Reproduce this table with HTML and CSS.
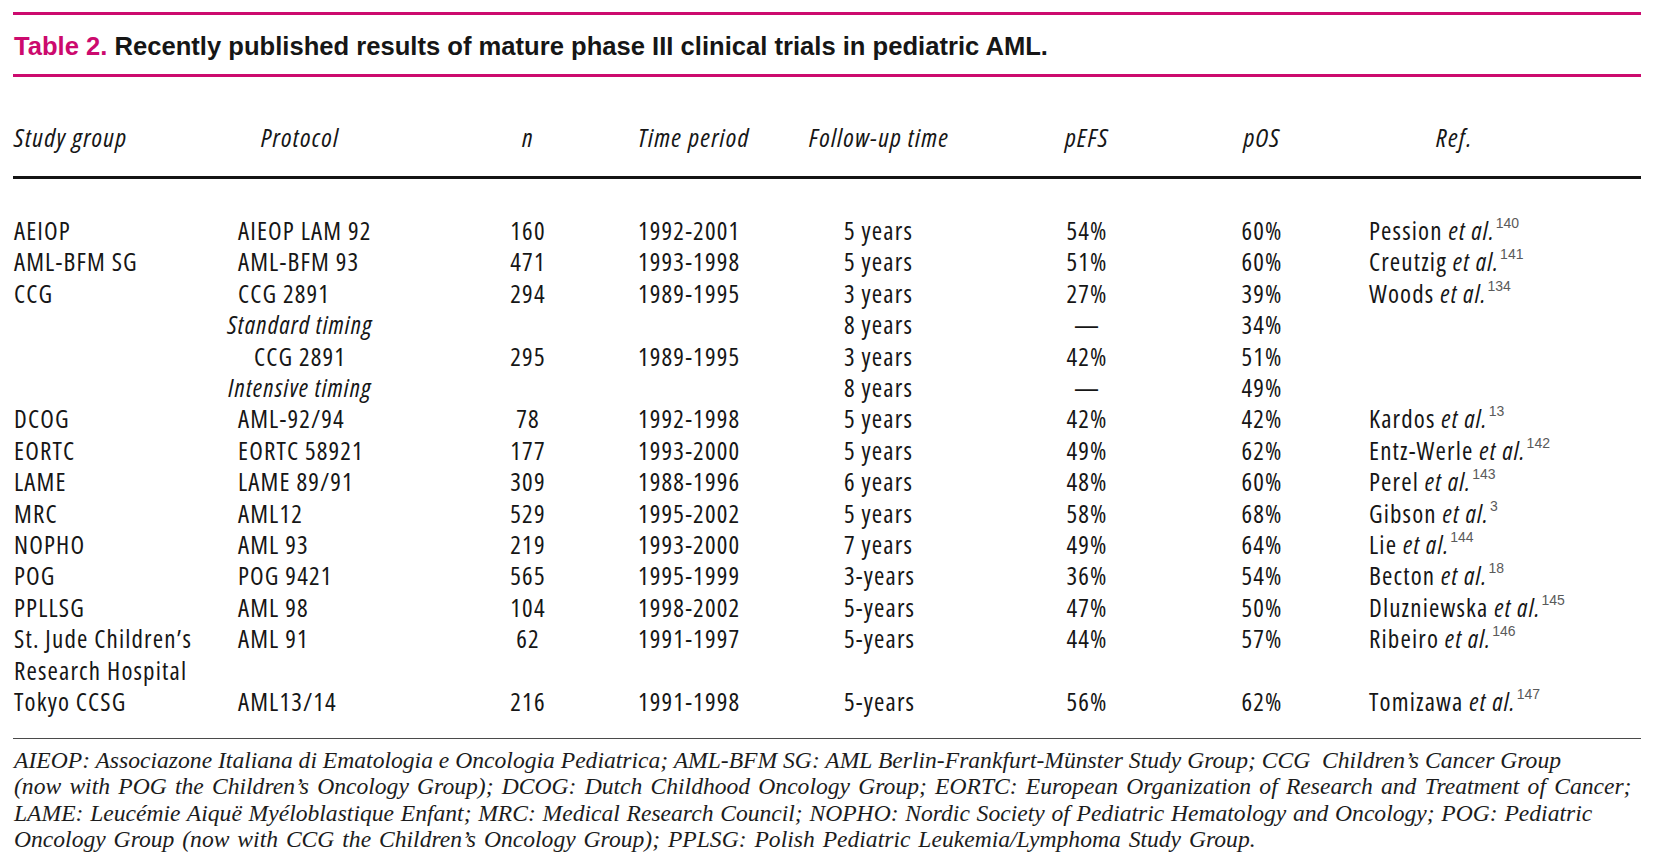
FILE: index.html
```html
<!DOCTYPE html>
<html lang="en">
<head>
<meta charset="utf-8">
<title>Table 2</title>
<link rel="stylesheet" href="styles.css">
</head>
<body>
<div class="page">
  <div class="rule-magenta rule-top"></div>
  <h1 class="title"><span class="title-label">Table 2.</span> Recently published results of mature phase III clinical trials in pediatric AML.</h1>
  <div class="rule-magenta rule-second"></div>

  <div class="grid head">
    <div class="c1">Study group</div>
    <div class="c2 ctr">Protocol</div>
    <div class="c3">n</div>
    <div class="c4">Time period</div>
    <div class="c5 ctr">Follow-up time</div>
    <div class="c6">pEFS</div>
    <div class="c7">pOS</div>
    <div class="c8 hdr">Ref.</div>
  </div>
  <div class="rule-black"></div>

  <div class="body">
    <div class="grid row">
      <div class="c1">AEIOP</div><div class="c2">AIEOP LAM 92</div><div class="c3">160</div><div class="c4">1992-2001</div><div class="c5">5 years</div><div class="c6">54%</div><div class="c7">60%</div><div class="c8">Pession <i>et al.</i><sup class="ref-num">140</sup></div>
    </div>
    <div class="grid row">
      <div class="c1">AML-BFM SG</div><div class="c2">AML-BFM 93</div><div class="c3">471</div><div class="c4">1993-1998</div><div class="c5">5 years</div><div class="c6">51%</div><div class="c7">60%</div><div class="c8">Creutzig <i>et al.</i><sup class="ref-num">141</sup></div>
    </div>
    <div class="grid row">
      <div class="c1">CCG</div><div class="c2">CCG 2891</div><div class="c3">294</div><div class="c4">1989-1995</div><div class="c5">3 years</div><div class="c6">27%</div><div class="c7">39%</div><div class="c8">Woods <i>et al.</i><sup class="ref-num">134</sup></div>
    </div>
    <div class="grid row">
      <div class="c1"></div><div class="c2 ctr"><i>Standard timing</i></div><div class="c3"></div><div class="c4"></div><div class="c5">8 years</div><div class="c6">—</div><div class="c7">34%</div><div class="c8"></div>
    </div>
    <div class="grid row">
      <div class="c1"></div><div class="c2 ctr">CCG 2891</div><div class="c3">295</div><div class="c4">1989-1995</div><div class="c5">3 years</div><div class="c6">42%</div><div class="c7">51%</div><div class="c8"></div>
    </div>
    <div class="grid row">
      <div class="c1"></div><div class="c2 ctr"><i>Intensive timing</i></div><div class="c3"></div><div class="c4"></div><div class="c5">8 years</div><div class="c6">—</div><div class="c7">49%</div><div class="c8"></div>
    </div>
    <div class="grid row">
      <div class="c1">DCOG</div><div class="c2">AML-92/94</div><div class="c3">78</div><div class="c4">1992-1998</div><div class="c5">5 years</div><div class="c6">42%</div><div class="c7">42%</div><div class="c8">Kardos <i>et al.</i><sup class="ref-num">13</sup></div>
    </div>
    <div class="grid row">
      <div class="c1">EORTC</div><div class="c2">EORTC 58921</div><div class="c3">177</div><div class="c4">1993-2000</div><div class="c5">5 years</div><div class="c6">49%</div><div class="c7">62%</div><div class="c8">Entz-Werle <i>et al.</i><sup class="ref-num">142</sup></div>
    </div>
    <div class="grid row">
      <div class="c1">LAME</div><div class="c2">LAME 89/91</div><div class="c3">309</div><div class="c4">1988-1996</div><div class="c5">6 years</div><div class="c6">48%</div><div class="c7">60%</div><div class="c8">Perel <i>et al.</i><sup class="ref-num">143</sup></div>
    </div>
    <div class="grid row">
      <div class="c1">MRC</div><div class="c2">AML12</div><div class="c3">529</div><div class="c4">1995-2002</div><div class="c5">5 years</div><div class="c6">58%</div><div class="c7">68%</div><div class="c8">Gibson <i>et al.</i><sup class="ref-num">3</sup></div>
    </div>
    <div class="grid row">
      <div class="c1">NOPHO</div><div class="c2">AML 93</div><div class="c3">219</div><div class="c4">1993-2000</div><div class="c5">7 years</div><div class="c6">49%</div><div class="c7">64%</div><div class="c8">Lie <i>et al.</i><sup class="ref-num">144</sup></div>
    </div>
    <div class="grid row">
      <div class="c1">POG</div><div class="c2">POG 9421</div><div class="c3">565</div><div class="c4">1995-1999</div><div class="c5">3-years</div><div class="c6">36%</div><div class="c7">54%</div><div class="c8">Becton <i>et al.</i><sup class="ref-num">18</sup></div>
    </div>
    <div class="grid row">
      <div class="c1">PPLLSG</div><div class="c2">AML 98</div><div class="c3">104</div><div class="c4">1998-2002</div><div class="c5">5-years</div><div class="c6">47%</div><div class="c7">50%</div><div class="c8">Dluzniewska <i>et al.</i><sup class="ref-num">145</sup></div>
    </div>
    <div class="grid row">
      <div class="c1">St. Jude Children’s<br>Research Hospital</div><div class="c2">AML 91</div><div class="c3">62</div><div class="c4">1991-1997</div><div class="c5">5-years</div><div class="c6">44%</div><div class="c7">57%</div><div class="c8">Ribeiro <i>et al.</i><sup class="ref-num">146</sup></div>
    </div>
    <div class="grid row">
      <div class="c1">Tokyo CCSG</div><div class="c2">AML13/14</div><div class="c3">216</div><div class="c4">1991-1998</div><div class="c5">5-years</div><div class="c6">56%</div><div class="c7">62%</div><div class="c8">Tomizawa <i>et al.</i><sup class="ref-num">147</sup></div>
    </div>
  </div>

  <div class="rule-thin"></div>
  <p class="foot">
    <span class="fl l1">AIEOP: Associazone Italiana di Ematologia e Oncologia Pediatrica; AML-BFM SG: AML Berlin-Frankfurt-Münster Study Group; CCG&nbsp; Children’s Cancer Group</span>
    <span class="fl l2">(now with POG the Children’s Oncology Group); DCOG: Dutch Childhood Oncology Group; EORTC: European Organization of Research and Treatment of Cancer;</span>
    <span class="fl l3">LAME: Leucémie Aiquë Myéloblastique Enfant; MRC: Medical Research Council; NOPHO: Nordic Society of Pediatric Hematology and Oncology; POG: Pediatric</span>
    <span class="fl l4">Oncology Group (now with CCG the Children’s Oncology Group); PPLSG: Polish Pediatric Leukemia/Lymphoma Study Group.</span>
  </p>
</div>
</body>
</html>
```

FILE: styles.css
```css
html, body {
  margin: 0;
  padding: 0;
  background: #ffffff;
}

.page {
  width: 1628px;
  margin-left: 13px;
  color: #161616;
}

.rule-magenta {
  height: 3px;
  background: #cc0a6e;
}

.rule-top {
  margin-top: 12px;
}

.title {
  margin: 16px 0 0 1px;
  font-family: "Liberation Sans", Arial, sans-serif;
  font-weight: 700;
  font-size: 25.6px;
  line-height: 30px;
  color: #161616;
  white-space: nowrap;
}

.title-label {
  color: #cc0a6e;
}

.rule-second {
  margin-top: 13px;
}

.grid {
  display: grid;
  grid-template-columns: 210px 194px 220px 171px 138px 280px 70px 344px;
  padding-left: 1px;
  font-family: "Open Sans", "DejaVu Sans", sans-serif;
  font-stretch: 75%;
  white-space: nowrap;
}

.head {
  margin-top: 45px;
  font-size: 26px;
  letter-spacing: 1.3px;
  line-height: 31px;
  font-style: italic;
}

.rule-black {
  margin-top: 23px;
  height: 3px;
  background: #141414;
}

.body {
  margin-top: 36px;
}

.row {
  font-size: 25px;
  letter-spacing: 1.15px;
  line-height: 31.4px;
}

.c2 {
  padding-left: 14px;
  padding-right: 42px;
}

.c2.ctr {
  padding-left: 0;
  text-align: center;
}

.c3 {
  text-align: center;
}

.c5 {
  padding-left: 35px;
}

.c5.ctr {
  padding-left: 0;
  text-align: center;
}

.c6, .c7 {
  text-align: center;
}

.c8 {
  padding-left: 72px;
}

.c8.hdr {
  padding-left: 139px;
}

.ref-num {
  font-family: "Liberation Sans", Arial, sans-serif;
  font-stretch: normal;
  font-style: normal;
  font-size: 14px;
  letter-spacing: 0;
  line-height: 0;
  vertical-align: 12px;
  color: #5a5a5a;
  margin-left: 1px;
}

.rule-thin {
  margin-top: 20px;
  height: 1px;
  background: #4a4a4a;
}

.foot {
  margin: 0;
  padding: 8px 0 0 1px;
  font-family: "Liberation Serif", "Times New Roman", serif;
  font-style: italic;
  font-size: 23.6px;
  line-height: 26.5px;
  color: #1c1c1c;
}

.fl {
  display: block;
  white-space: nowrap;
}

.l2 {
  word-spacing: 2.3px;
}

.l3 {
  word-spacing: 0.8px;
}

.l4 {
  word-spacing: 2px;
}
```
